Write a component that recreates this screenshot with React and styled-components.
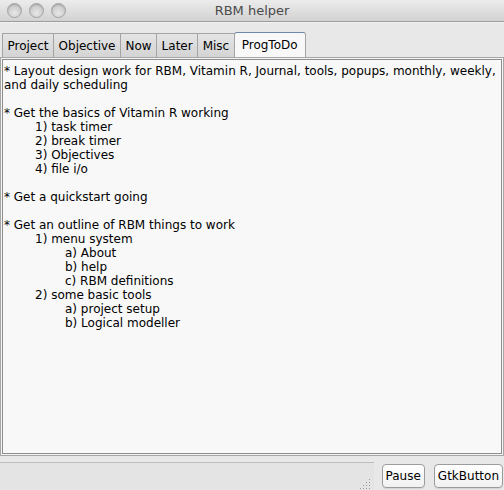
import React from 'react'
import styled, { createGlobalStyle } from 'styled-components'

const Global = createGlobalStyle`
  body {
    margin: 0;
    background: #e8e8e8;
    font-family: "DejaVu Sans", sans-serif;
    font-size: 12px;
    color: #000;
  }
`

const Window = styled.div`
  width: 504px;
  height: 490px;
  display: flex;
  flex-direction: column;
  background: #e8e8e8;
  overflow: hidden;
`

const TitleBar = styled.div`
  height: 21px;
  flex: none;
  display: flex;
  align-items: center;
  position: relative;
  background: linear-gradient(#ececec, #d2d2d2);
  border-bottom: 1px solid #9c9c9c;
  box-shadow: 0 1px 0 #f2f2f2;
`

const Lights = styled.div`
  display: flex;
  gap: 7px;
  padding-left: 7px;
`

const Light = styled.span`
  width: 13px;
  height: 13px;
  border-radius: 50%;
  border: 1px solid #a2a2a2;
  background: radial-gradient(circle at 50% 70%, #e8e8e8 0%, #cfcfcf 55%, #b9b9b9 100%);
  box-shadow: inset 0 1px 1px rgba(0, 0, 0, 0.15);
`

const Title = styled.div`
  position: absolute;
  left: 0;
  right: 0;
  text-align: center;
  font-size: 13px;
  color: #4a4a4a;
  pointer-events: none;
`

const TabBar = styled.div`
  display: flex;
  align-items: flex-end;
  margin-top: 10px;
  padding-left: 2px;
  height: 25px;
  flex: none;
`

const Tab = styled.div`
  height: ${p => (p.$active ? 24 : 22)}px;
  padding: 0 ${p => (p.$active ? 7 : 4.5)}px;
  margin-left: -1px;
  display: flex;
  align-items: center;
  padding-top: ${p => (p.$active ? 0 : 1)}px;
  box-sizing: content-box;
  border: 1px solid #a4a4a4;
  border-bottom: none;
  border-top-color: ${p => (p.$active ? '#6f87aa' : '#a4a4a4')};
  border-radius: ${p => (p.$active ? '3px 3px 0 0' : '0')};
  background: ${p => (p.$active ? '#f8f8f8' : 'linear-gradient(#e4e4e4, #d4d4d4)')};
  color: #000;
  white-space: nowrap;
  position: relative;
  z-index: ${p => (p.$active ? 1 : 0)};

  &:first-child { margin-left: 0; }
`

const Frame = styled.div`
  flex: 1;
  display: flex;
  border: 1px solid #a6a6a6;
  padding: 1px;
  background: #f4f4f4;
  min-height: 0;
`

const Editor = styled.div`
  flex: 1;
  border: 1px solid #8e8e8e;
  background: #f8f8f8;
  padding: 4px 0 0 1px;
  line-height: 14px;
  overflow: hidden;
`

const Line = styled.div`
  height: 14px;
  white-space: nowrap;
  padding-left: ${p => [0, 31, 61][p.$level || 0]}px;
`

const BottomBar = styled.div`
  height: 34px;
  flex: none;
  display: flex;
  align-items: flex-start;
  gap: 8px;
`

const Status = styled.div`
  flex: 1;
  margin-top: 6px;
  height: 27px;
  border-top: 1px solid #bdbdbd;
  background: #e4e4e4;
  display: flex;
  justify-content: flex-end;
  align-items: flex-end;
  padding: 0 3px 3px 0;
`

const Buttons = styled.div`
  display: flex;
  gap: 9px;
  padding-top: 8px;
  padding-right: 1px;
`

const Button = styled.button`
  height: 24px;
  padding: 0 3px;
  font-family: "DejaVu Sans", sans-serif;
  font-size: 12px;
  color: #000;
  border: 1px solid #9c9c9c;
  border-radius: 4px;
  background: linear-gradient(#ffffff, #f1f1f1);
  box-shadow: 0 1px 0 rgba(0, 0, 0, 0.08);
`

const Grip = () => (
  <svg width="12" height="12" viewBox="0 0 12 12">
    {[[10, 2], [10, 5], [7, 5], [10, 8], [7, 8], [4, 8], [10, 11], [7, 11], [4, 11], [1, 11]].map(([x, y], i) => (
      <rect key={i} x={x} y={y - 1} width="1" height="1" fill="#9a9a9a" />
    ))}
  </svg>
)

const tabs = ['Project', 'Objective', 'Now', 'Later', 'Misc', 'ProgToDo']

const lines = [
  ['* Layout design work for RBM, Vitamin R, Journal, tools, popups, monthly, weekly,', 0],
  ['and daily scheduling', 0],
  ['', 0],
  ['* Get the basics of Vitamin R working', 0],
  ['1) task timer', 1],
  ['2) break timer', 1],
  ['3) Objectives', 1],
  ['4) file i/o', 1],
  ['', 0],
  ['* Get a quickstart going', 0],
  ['', 0],
  ['* Get an outline of RBM things to work', 0],
  ['1) menu system', 1],
  ['a) About', 2],
  ['b) help', 2],
  ['c) RBM definitions', 2],
  ['2) some basic tools', 1],
  ['a) project setup', 2],
  ['b) Logical modeller', 2]
]

export default function App () {
  return (
    <Window>
      <Global />
      <TitleBar>
        <Lights>
          <Light />
          <Light />
          <Light />
        </Lights>
        <Title>RBM helper</Title>
      </TitleBar>
      <TabBar>
        {tabs.map(t => (
          <Tab key={t} $active={t === 'ProgToDo'}>{t}</Tab>
        ))}
      </TabBar>
      <Frame>
        <Editor>
          {lines.map(([text, level], i) => (
            <Line key={i} $level={level}>{text}</Line>
          ))}
        </Editor>
      </Frame>
      <BottomBar>
        <Status>
          <Grip />
        </Status>
        <Buttons>
          <Button>Pause</Button>
          <Button>GtkButton</Button>
        </Buttons>
      </BottomBar>
    </Window>
  )
}
